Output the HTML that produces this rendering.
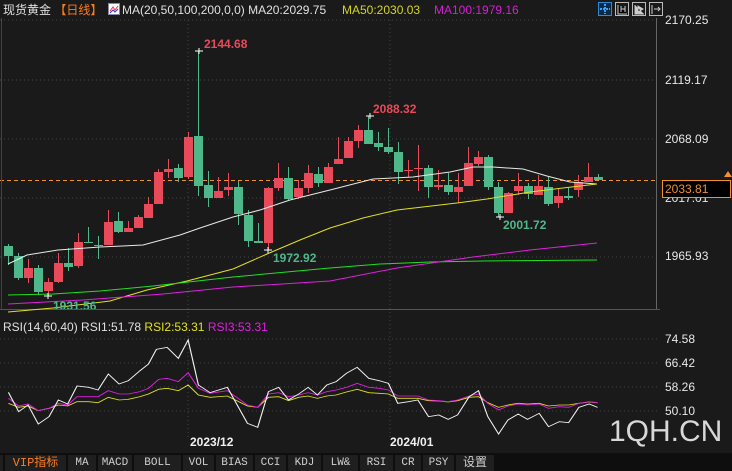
<!DOCTYPE html>
<html><head><meta charset="utf-8"><style>
body{margin:0;width:732px;height:471px;background:#1a1a1a;overflow:hidden;font-family:"Liberation Sans","Noto Sans CJK SC",sans-serif;position:relative}
.t{position:absolute;white-space:nowrap;font-size:12px;line-height:14px}
.ax{position:absolute;left:665px;font-size:12px;color:#e8e8e8;line-height:14px}
.tab{position:absolute;top:455px;height:16px;background:#1f1f1f;color:#cfcfcf;font-family:"Liberation Mono","Noto Sans CJK SC",monospace;font-size:11px;line-height:16px;text-align:center}
</style></head><body>
<div class="t" style="left:3px;top:3px;color:#e0e0e0">现货黄金 <span style="color:#ff7a1a">【日线】</span></div>
<svg style="position:absolute;left:108px;top:3px" width="12" height="12"><rect x="0.5" y="0.5" width="11" height="11" fill="#fff" stroke="#88a"/><polyline points="2,8 5,4 7,7 10,3" fill="none" stroke="#e33" stroke-width="1"/><polyline points="2,10 5,7 7,9 10,6" fill="none" stroke="#33e"/></svg>
<div class="t" style="left:122px;top:3px;color:#e0e0e0">MA(20,50,100,200,0,0) MA20:2029.75</div>
<div class="t" style="left:342px;top:3px;color:#d4d420">MA50:2030.03</div>
<div class="t" style="left:434px;top:3px;color:#d020d0">MA100:1979.16</div>
<svg style="position:absolute;left:597px;top:1px" width="68" height="16">
<rect x="1.5" y="1.5" width="13" height="13" fill="#0a2a4a" stroke="#2a8ad8"/><path d="M8 3v10M3 8h10" stroke="#3aa0ff" stroke-width="2" stroke-dasharray="2 1"/>
<rect x="18.5" y="1.5" width="13" height="13" fill="none" stroke="#bbb"/><path d="M21 4v9h9M24 5v6M28 5v6M24 8h4" stroke="#ccc"/>
<rect x="35.5" y="1.5" width="13" height="13" fill="none" stroke="#bbb"/><path d="M38 4v9h9M41 5l5 3-5 3z" stroke="#ccc" fill="#ccc"/>
<rect x="52.5" y="1.5" width="13" height="13" fill="none" stroke="#bbb"/><path d="M55 4v9M57 8h6M61 6l2 2-2 2" stroke="#ccc"/>
</svg>
<svg style="position:absolute;left:0;top:0" width="732" height="471">
<g stroke="#444" stroke-dasharray="1 3">
<line x1="0" y1="20" x2="657" y2="20"/><line x1="0" y1="80" x2="657" y2="80"/><line x1="0" y1="139" x2="657" y2="139"/><line x1="0" y1="198" x2="657" y2="198"/><line x1="0" y1="257" x2="657" y2="257"/>
<line x1="188" y1="20" x2="188" y2="440"/><line x1="390" y1="20" x2="390" y2="440"/>
<line x1="0" y1="339" x2="657" y2="339"/><line x1="0" y1="363" x2="657" y2="363"/><line x1="0" y1="387" x2="657" y2="387"/><line x1="0" y1="411" x2="657" y2="411"/>
</g>
<line x1="656.5" y1="18" x2="656.5" y2="310" stroke="#666"/>
<line x1="0" y1="309.5" x2="660" y2="309.5" stroke="#555"/>
<line x1="0" y1="180.5" x2="657" y2="180.5" stroke="#f09030" stroke-dasharray="4 3"/>
<line x1="1.5" y1="18" x2="1.5" y2="310" stroke="#444"/>
<g id="c"></g>
<polyline fill="none" stroke="#e8e8e8" stroke-width="1" points="8,264 27,255 58,250 100,247 143,245 180,235 200,228 233,217 260,210 290,200 330,190 373,179 413,177 450,172 473,167 493,167 523,169 547,176 570,182 597,184"/>
<polyline fill="none" stroke="#e0e020" points="8,312 53,308 110,301 147,290 187,281 233,269 267,254 300,240 330,228 363,218 397,210 457,203 487,199 530,192 563,188 597,184"/>
<polyline fill="none" stroke="#20e020" points="8,295 53,294 100,291 153,286 233,277 330,268 380,264 430,262 483,261 597,260"/>
<polyline fill="none" stroke="#e020e0" points="8,304 83,300 163,294 233,287 330,281 397,268 473,257 530,250 597,243"/>
<g fill="#fff" stroke="#fff"><path d="M195 51h8M199 48v6M366 116h8M370 113v6M496 217h8M500 214v6M264 250h8M268 247v6M44 296h8M48 293v6"/></g>
</svg>
<div class="t" style="left:204px;top:37px;color:#e84a5a;font-weight:bold">2144.68</div>
<div class="t" style="left:373px;top:102px;color:#e84a5a;font-weight:bold">2088.32</div>
<div class="t" style="left:503px;top:218px;color:#4fb88a;font-weight:bold">2001.72</div>
<div class="t" style="left:273px;top:251px;color:#4fb88a;font-weight:bold">1972.92</div>
<div class="t" style="left:53px;top:299px;color:#4fb88a;font-weight:bold;height:10px;overflow:hidden">1931.56</div>
<div class="ax" style="top:13px">2170.25</div>
<div class="ax" style="top:73px">2119.17</div>
<div class="ax" style="top:132px">2068.09</div>
<div class="ax" style="top:191px">2017.01</div>
<div class="ax" style="top:249px">1965.93</div>
<div style="position:absolute;left:662px;top:180px;width:66px;height:16px;border:1px solid #f09030;background:#000;color:#f09030;font-size:12px;line-height:16px;padding-left:2px;box-sizing:border-box;width:69px;height:18px">2033.81</div>
<div style="position:absolute;left:724px;top:171px;width:0;height:0;border-left:4px solid transparent;border-right:4px solid transparent;border-bottom:6px solid #f09030"></div>
<div class="t" style="left:3px;top:320px;color:#e0e0e0">RSI(14,60,40) RSI1:51.78 <span style="color:#e0e020">RSI2:53.31</span> <span style="color:#e020e0">RSI3:53.31</span></div>
<div class="ax" style="top:332px">74.58</div>
<div class="ax" style="top:356px">66.42</div>
<div class="ax" style="top:380px">58.26</div>
<div class="ax" style="top:404px">50.10</div>
<svg style="position:absolute;left:0;top:300px" width="732" height="171" viewBox="0 0 1568 513" preserveAspectRatio="none">
<polyline fill="none" stroke="#e0e020" stroke-width="2.5" points="18,310 40,322 60,318 82,332 105,325 125,315 145,318 165,305 190,305 210,308 232,292 255,300 275,298 300,290 318,282 340,268 358,265 382,272 403,255 425,285 450,292 487,288 530,318 552,322 575,292 597,290 618,302 640,292 660,288 680,295 700,288 720,285 742,276 765,268 790,278 812,280 832,282 852,295 875,295 895,295 918,302 940,303 960,306 980,302 1005,292 1025,290 1045,308 1068,322 1088,315 1110,310 1130,312 1155,310 1175,318 1198,315 1218,315 1240,310 1262,306 1280,308"/>
<polyline fill="none" stroke="#e020e0" stroke-width="2.5" points="18,295 40,318 60,312 82,332 105,325 125,310 145,315 165,290 190,290 210,290 232,272 255,282 275,282 300,275 318,265 340,238 358,235 382,245 403,218 425,265 450,280 487,272 530,315 552,322 575,282 597,278 618,290 640,285 660,278 680,285 700,275 720,270 742,262 765,250 790,262 812,265 832,270 852,288 875,288 895,288 918,300 940,302 960,305 980,300 1005,288 1025,282 1045,310 1068,330 1088,318 1110,312 1130,315 1155,312 1175,325 1198,320 1218,322 1240,310 1262,305 1280,308"/>
<polyline fill="none" stroke="#f0f0f0" stroke-width="2.5" points="18,277 40,335 60,315 82,372 105,350 125,300 145,312 165,258 190,262 210,270 232,222 255,252 275,242 300,212 318,192 335,148 358,142 382,175 403,120 425,255 450,278 487,262 530,370 552,382 575,275 597,262 618,300 640,282 660,262 680,285 700,255 720,245 742,220 765,202 790,235 812,242 832,250 852,310 875,305 895,300 918,350 940,345 960,358 980,345 1005,290 1025,272 1045,350 1068,402 1088,360 1110,342 1130,358 1155,340 1175,380 1198,365 1218,368 1240,322 1262,312 1280,322"/>
</svg>
<div class="t" style="left:190px;top:435px;color:#f0f0f0;font-weight:bold">2023/12</div>
<div class="t" style="left:390px;top:435px;color:#f0f0f0;font-weight:bold">2024/01</div>
<div class="t" style="left:609px;top:416px;color:#d8d8d8;font-size:30px;line-height:32px">1QH.CN</div>
<div style="position:absolute;left:0;top:453px;width:732px;height:18px;background:#0e0e0e"></div>
<div class="tab" style="left:0;width:3px"></div>
<div class="tab" style="left:5px;width:61px;color:#ff7a1a;font-size:12px">VIP指标</div>
<div class="tab" style="left:68px;width:28px">MA</div>
<div class="tab" style="left:98px;width:34px">MACD</div>
<div class="tab" style="left:134px;width:47px">BOLL</div>
<div class="tab" style="left:183px;width:31px">VOL</div>
<div class="tab" style="left:216px;width:37px">BIAS</div>
<div class="tab" style="left:255px;width:31px">CCI</div>
<div class="tab" style="left:288px;width:33px">KDJ</div>
<div class="tab" style="left:323px;width:35px">LW&amp;</div>
<div class="tab" style="left:360px;width:33px">RSI</div>
<div class="tab" style="left:395px;width:26px">CR</div>
<div class="tab" style="left:423px;width:31px">PSY</div>
<div class="tab" style="left:456px;width:38px;font-size:12px">设置</div>
<script>
var d=[[4,246,256,244,265,0],[14,256,278,253,280,0],[24,268,278,259,283,1],[34,268,292,265,295,0],[44,282,291,278,296,1],[54,263,282,253,283,1],[64,263,267,248,271,0],[74,242,266,233,268,1],[84,242,243,227,243,0],[94,245,246,236,259,0],[104,222,245,210,245,1],[114,221,232,212,233,0],[124,228,232,221,232,1],[134,217,228,215,228,1],[144,204,218,197,218,1],[154,172,204,169,204,1],[164,169,172,159,178,1],[174,168,178,164,182,0],[184,137,177,132,179,1],[194,136,186,51,196,0],[204,185,198,171,207,0],[214,191,198,177,198,1],[224,187,190,173,196,1],[234,187,214,181,225,0],[244,215,241,210,247,0],[254,241,243,223,243,0],[264,188,243,187,250,1],[274,178,188,163,191,1],[284,178,199,167,200,0],[294,188,197,180,199,1],[304,173,188,165,193,1],[314,174,183,167,187,0],[324,167,183,163,183,1],[334,159,164,137,164,1],[344,141,158,137,158,1],[354,130,141,125,148,1],[364,130,144,116,144,0],[374,143,147,132,151,0],[384,147,152,128,154,0],[394,152,172,142,184,0],[404,170,171,160,177,1],[414,168,169,145,191,1],[424,168,187,165,198,0],[434,185,187,170,190,1],[444,185,192,173,195,0],[454,187,192,173,203,1],[464,163,186,147,186,1],[474,157,164,151,166,1],[484,157,187,155,190,0],[494,187,213,182,217,0],[504,193,213,192,213,1],[514,186,191,173,195,1],[524,186,194,183,199,0],[534,186,195,175,195,1],[544,187,204,176,206,0],[554,196,203,189,208,1],[564,196,198,188,200,0],[574,182,190,175,197,1],[584,177,182,163,182,1],[594,177,180,174,180,0]];
var s='';d.forEach(function(c){var col=c[5]?'#e84a5a':'#4fb88a';var h=Math.max(1,c[2]-c[1]);s+='<line x1="'+(c[0]+4.5)+'" y1="'+c[3]+'" x2="'+(c[0]+4.5)+'" y2="'+c[4]+'" stroke="'+col+'"/><rect x="'+c[0]+'" y="'+c[1]+'" width="9" height="'+h+'" fill="'+col+'"/>';});
document.getElementById('c').innerHTML=s;
</script>
</body></html>
